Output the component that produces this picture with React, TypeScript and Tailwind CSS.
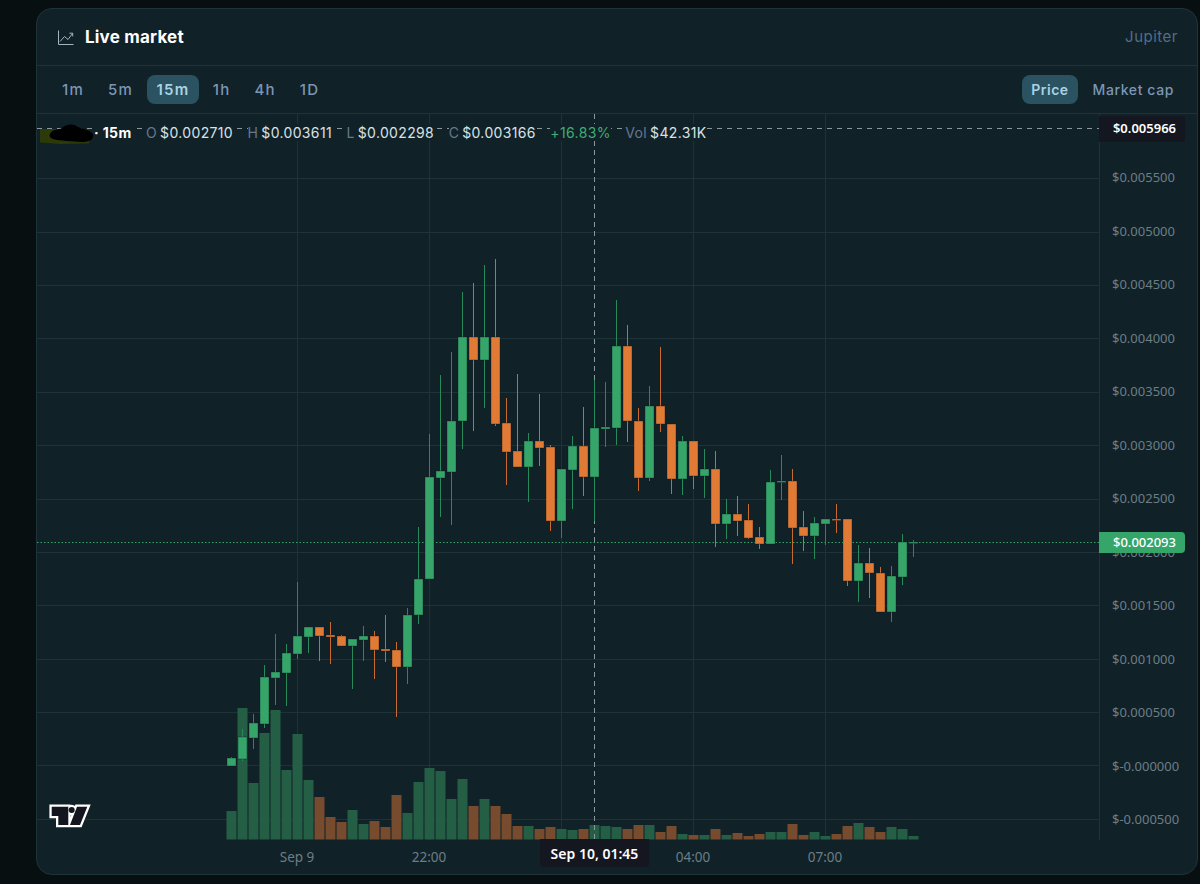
import React from "react";

type Candle = [number, number, number, number, "g" | "o"];

// wick top, body top, body bottom, wick bottom, colour (y in page pixels)
const candles: Candle[] = [
  [757, 758, 766, 766, "g"], [729, 737, 759, 761, "g"], [714, 723, 738, 749, "g"], [665, 677, 724, 728, "g"],
  [634, 672, 678, 705, "g"], [644, 653, 673, 706, "g"], [582, 636, 654, 659, "g"], [627, 627, 637, 653, "g"],
  [627, 627, 636, 661, "o"], [622, 635, 637, 664, "o"], [635, 636, 646, 646, "o"], [639, 639, 646, 689, "g"],
  [626, 636, 640, 661, "g"], [631, 636, 650, 679, "o"], [615, 649, 651, 662, "o"], [642, 650, 667, 717, "o"],
  [608, 615, 667, 684, "g"], [527, 579, 615, 624, "g"], [434, 477, 579, 579, "g"], [375, 471, 478, 517, "g"],
  [352, 421, 472, 525, "g"], [292, 337, 421, 449, "g"], [283, 337, 360, 431, "o"], [265, 337, 360, 408, "g"],
  [259, 337, 424, 426, "o"], [398, 423, 452, 485, "o"], [374, 451, 467, 467, "o"], [433, 441, 467, 502, "g"],
  [394, 441, 448, 466, "o"], [445, 447, 521, 531, "o"], [469, 469, 521, 538, "g"], [436, 446, 470, 509, "g"],
  [407, 446, 477, 496, "o"], [380, 428, 477, 521, "g"], [382, 427, 429, 447, "g"], [300, 346, 428, 445, "g"],
  [325, 346, 421, 442, "o"], [408, 421, 478, 491, "o"], [386, 406, 478, 481, "g"], [347, 406, 424, 432, "o"],
  [424, 424, 479, 494, "o"], [436, 441, 479, 495, "g"], [441, 441, 476, 489, "o"], [449, 469, 476, 498, "g"],
  [451, 469, 524, 547, "o"], [499, 514, 524, 539, "g"], [496, 514, 521, 536, "o"], [504, 520, 538, 539, "o"],
  [527, 537, 544, 549, "o"], [470, 482, 544, 544, "g"], [455, 481, 482, 500, "g"], [469, 481, 528, 564, "o"],
  [511, 527, 536, 551, "o"], [517, 523, 536, 559, "g"], [519, 519, 524, 545, "g"], [504, 519, 520, 533, "o"],
  [519, 519, 581, 586, "o"], [545, 563, 581, 602, "g"], [548, 563, 573, 598, "o"], [567, 573, 612, 612, "o"],
  [566, 576, 612, 622, "g"], [534, 542, 577, 585, "g"], [540, 542, 543, 557, "g"],
];

const volumes = [
  811, 708, 783, 733, 710, 770, 734, 780, 797, 817, 822, 810, 824, 821, 827, 795, 813, 782, 768, 771, 799,
  779, 806, 799, 806, 814, 826, 826, 829, 827, 829, 830, 829, 825, 826, 827, 829, 825, 825, 832, 826, 834,
  835, 835, 829, 835, 833, 836, 834, 832, 832, 824, 835, 832, 836, 834, 826, 823, 827, 832, 827, 829, 836,
];

const hLines = [178.5, 232.5, 285.5, 338.5, 392.5, 445.5, 499.5, 552.5, 605.5, 659.5, 712.5, 765.5, 819.5];
const vLines = [297.5, 429.5, 561.5, 693.5, 825.5];

const prices = [
  "$0.005500", "$0.005000", "$0.004500", "$0.004000", "$0.003500", "$0.003000", "$0.002500",
  "$0.002000", "$0.001500", "$0.001000", "$0.000500", "$-0.000000", "$-0.000500",
];

const intervals = ["1m", "5m", "15m", "1h", "4h", "1D"];

const legend = [
  ["O", "$0.002710"],
  ["H", "$0.003611"],
  ["L", "$0.002298"],
  ["C", "$0.003166"],
];

function ChartDrawing() {
  return (
    <svg className="absolute inset-0 block" width={1062} height={726} viewBox="37 114 1062 726">
      {hLines.map((y) => (
        <line key={y} x1={37} x2={1099} y1={y} y2={y} stroke="#1d3239" />
      ))}
      {vLines.map((x) => (
        <line key={x} x1={x} x2={x} y1={114} y2={840} stroke="#1d3239" />
      ))}

      <line x1={37} x2={1099} y1={128.5} y2={128.5} stroke="#8a979d" strokeDasharray="5 5" />
      <line x1={37} x2={1099} y1={542.5} y2={542.5} stroke="#36a56a" strokeDasharray="1.5 2" />

      {volumes.map((top, i) => (
        <rect
          key={i}
          x={226.5 + i * 11}
          y={top}
          width={10}
          height={839.5 - top}
          fill={candles[i][4] === "g" ? "#235e45" : "#774b2e"}
        />
      ))}

      <line x1={594.5} x2={594.5} y1={114} y2={840} stroke="#8a979d" strokeDasharray="5 4" />

      {candles.map(([wt, bt, bb, wb, c], i) => {
        const x = 231.5 + i * 11;
        return (
          <g key={i}>
            <line x1={x} x2={x} y1={wt} y2={wb} stroke={c === "g" ? "#278a59" : "#c96a30"} />
            <rect
              x={x - 4.5}
              y={bt}
              width={9}
              height={Math.max(bb - bt, 1.5)}
              fill={c === "g" ? "#36a56a" : "#e07a35"}
              stroke="#0c171c"
              strokeOpacity={0.6}
              strokeWidth={0.6}
            />
          </g>
        );
      })}

      {/* chart library mark */}
      <path
        d="M51.7 806.7H68.3V825H58.3V816H51.7ZM77 806.7H87.3L80 825H70ZM74.7 810A3 3 0 1 1 68.7 810 3 3 0 0 1 74.7 810Z"
        fill="#14161f"
        stroke="#ffffff"
        strokeWidth={4.6}
        paintOrder="stroke"
      />
    </svg>
  );
}

export default function App() {
  return (
    <div className="h-[884px] w-[1200px] bg-[#080f11] pt-2 pl-9 pr-[2px] pb-[9px] font-['Inter',sans-serif]">
      <div className="flex h-full flex-col overflow-hidden rounded-2xl border border-[#1e333b] bg-[#112128]">
        <div className="flex h-[57px] shrink-0 items-center justify-between border-b border-[#1e333b] pl-[21px] pr-[19px]">
          <div className="flex items-center gap-[11px]">
            <svg width="16" height="15" viewBox="0 0 16 15" fill="none" stroke="#a3b6c0" strokeWidth="1">
              <path d="M0.5 0.5V14.5H15.5" />
              <path d="M2 11.5 6.5 6.5 10 9.5 14.5 3.5" />
              <path d="M11.5 3.2H14.7V6.4" />
            </svg>
            <span className="mt-[2px] text-[17px] font-bold tracking-[0.2px] text-white">Live market</span>
          </div>
          <span className="mt-[1px] text-[15px] tracking-[0.5px] text-[#526e88]">Jupiter</span>
        </div>

        <div className="flex h-[48px] shrink-0 items-center justify-between border-b border-[#1e333b] pl-[15px] pr-[13px]">
          <div className="flex items-center gap-[4px]">
            {intervals.map((t) => (
              <button
                key={t}
                className={
                  t === "15m"
                    ? "h-[29px] rounded-lg bg-[#2a5260] px-[9.5px] pt-px text-[15px] font-semibold tracking-[1.2px] text-[#a9d3e4]"
                    : "h-[29px] rounded-lg px-[10px] pt-px text-[15px] font-medium tracking-[1.2px] text-[#7b96b4]"
                }
              >
                {t}
              </button>
            ))}
          </div>
          <div className="flex items-center gap-[5px]">
            <button className="h-[29px] rounded-lg bg-[#2a5260] px-[9px] text-[14px] font-semibold tracking-[0.5px] text-[#a9d3e4]">
              Price
            </button>
            <button className="h-[29px] rounded-lg px-[10px] text-[14px] font-medium tracking-[0.6px] text-[#7b96b4]">
              Market cap
            </button>
          </div>
        </div>

        <div className="relative flex min-h-0 flex-1 flex-col">
          <div className="flex h-[726px] shrink-0">
            <div className="relative w-[1062px] shrink-0 overflow-hidden">
              <ChartDrawing />
              <div className="absolute left-[3px] top-[5px] flex items-center gap-[14.5px] text-[14px] leading-[17px] tracking-[0.35px] text-[#d8e2e6]">
                <div className="flex items-center">
                  <svg width="54" height="22" viewBox="0 0 54 22" className="mt-[5px] block">
                    <path d="M0 5H49V19.5L20 20 0 18.5Z" fill="#2b3a08" />
                    <path
                      d="M10 10C12 5 18 6 22 4 26 0 33 -1 38 3 44 5 50 6 53 10 54 15 50 18 42 18 32 17 20 17 13 15 10 14 9 12 10 10Z"
                      fill="#000000"
                    />
                  </svg>
                  <span className="bg-[#112128] font-bold text-white">· 15m</span>
                </div>
                {legend.map(([k, v]) => (
                  <div key={k} className="flex gap-[3px] bg-[#112128]">
                    <span className="text-[#64798f]">{k}</span>
                    <span>{v}</span>
                  </div>
                ))}
                <span className="bg-[#112128] text-[#3fae75]">+16.83%</span>
                <div className="flex gap-[3px] bg-[#112128]">
                  <span className="text-[#64798f]">Vol</span>
                  <span>$42.31K</span>
                </div>
              </div>
            </div>

            <div className="relative w-[98px] shrink-0 border-l border-[#1d3239] pl-[12px] pt-[37px] font-['Noto_Sans',sans-serif] text-[13px] text-[#6b7e85]">
              {prices.map((p) => (
                <div key={p} className="flex h-[53.5px] items-center">
                  {p}
                </div>
              ))}
              <div className="absolute -left-px top-[2px] flex h-[26px] w-[86px] items-center justify-end bg-[#141720] pr-[9px] font-semibold text-white">
                $0.005966
              </div>
              <div className="absolute -left-px top-[418px] flex h-[21px] w-[86px] items-center justify-end rounded-r-sm bg-[#36a56a] pr-[9px] font-medium text-white">
                $0.002093
              </div>
            </div>
          </div>

          <div className="relative flex flex-1 items-center pl-[194px] font-['Noto_Sans',sans-serif] text-[13.5px] text-[#6b7e85]">
            <span className="w-[132px] text-center">Sep 9</span>
            <span className="w-[132px] text-center">22:00</span>
            <span className="w-[132px]" />
            <span className="w-[132px] text-center">04:00</span>
            <span className="w-[132px] text-center">07:00</span>
            <div className="absolute left-[503px] top-[-1px] flex h-[28px] w-[109px] items-center justify-center rounded-b-sm bg-[#141720] text-[14px] font-semibold text-white">
              Sep 10, 01:45
            </div>
          </div>
        </div>
      </div>
    </div>
  );
}
